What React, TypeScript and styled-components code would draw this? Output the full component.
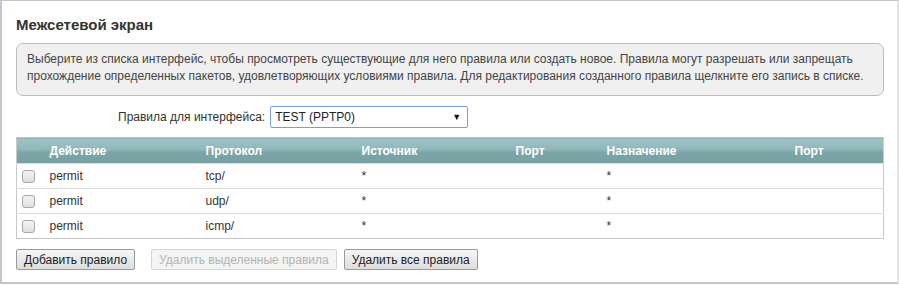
import React from "react";
import styled, { createGlobalStyle } from "styled-components";

const GlobalStyle = createGlobalStyle`
	html, body {
		margin: 0;
		padding: 0;
		background: #fff;
		font-family: "Liberation Sans", Arial, sans-serif;
		font-size: 12px;
		color: #333;
	}
`;

const columns = [
	{ title: "", width: 25 },
	{ title: "Действие", width: 156 },
	{ title: "Протокол", width: 156 },
	{ title: "Источник", width: 154 },
	{ title: "Порт", width: 91 },
	{ title: "Назначение", width: 188 },
	{ title: "Порт", width: 0 },
];

const rules = [
	{ action: "permit", proto: "tcp/", src: "*", srcPort: "", dst: "*", dstPort: "" },
	{ action: "permit", proto: "udp/", src: "*", srcPort: "", dst: "*", dstPort: "" },
	{ action: "permit", proto: "icmp/", src: "*", srcPort: "", dst: "*", dstPort: "" },
];

const App = () => {
	return (
		<Frame>
			<GlobalStyle />
			<Title>Межсетевой экран</Title>
			<InfoBox>
				Выберите из списка интерфейс, чтобы просмотреть существующие для него правила или создать новое. Правила могут
				разрешать или запрещать прохождение определенных пакетов, удовлетворяющих условиями правила. Для редактирования
				созданного правила щелкните его запись в списке.
			</InfoBox>
			<SelectRow>
				<Label>Правила для интерфейса:</Label>
				<Select>
					<span>TEST (PPTP0)</span>
					<Arrow>▼</Arrow>
				</Select>
			</SelectRow>
			<Table>
				<colgroup>
					{columns.map((c, i) => (
						<col key={i} style={c.width ? { width: c.width } : undefined} />
					))}
				</colgroup>
				<thead>
					<tr>
						{columns.map((c, i) => (
							<Th key={i}>{c.title}</Th>
						))}
					</tr>
				</thead>
				<tbody>
					{rules.map((r, i) => (
						<Row key={i}>
							<CheckCell>
								<Checkbox />
							</CheckCell>
							<Td>{r.action}</Td>
							<Td>{r.proto}</Td>
							<Td>{r.src}</Td>
							<Td>{r.srcPort}</Td>
							<Td>{r.dst}</Td>
							<Td>{r.dstPort}</Td>
						</Row>
					))}
				</tbody>
			</Table>
			<Buttons>
				<Button>Добавить правило</Button>
				<Button disabled $gap={16}>
					Удалить выделенные правила
				</Button>
				<Button $gap={7}>Удалить все правила</Button>
			</Buttons>
		</Frame>
	);
};

const Frame = styled.div`
	box-sizing: border-box;
	width: 899px;
	height: 284px;
	border-top: 1px solid #c3c6cc;
	border-left: 2px solid #c3c6cc;
	border-bottom: 2px solid #c3c6cc;
	border-right: 2px solid #e3e3e3;
	padding: 0 14px 0 14px;
	background: #fff;
`;

const Title = styled.h1`
	margin: 0;
	padding-top: 15px;
	height: 27px;
	font-size: 15px;
	font-weight: bold;
	color: #333;
`;

const InfoBox = styled.div`
	box-sizing: border-box;
	width: 868px;
	height: 53px;
	background: #f0f0f0;
	border: 1px solid #bdbdbd;
	border-radius: 7px;
	padding: 7px 10px;
	line-height: 17px;
	color: #444;
`;

const SelectRow = styled.div`
	display: flex;
	align-items: center;
	justify-content: flex-start;
	padding-left: 102px;
	margin-top: 10px;
	height: 22px;
`;

const Label = styled.span`
	color: #333;
	margin-right: 5px;
`;

const Select = styled.div`
	box-sizing: border-box;
	width: 198px;
	height: 22px;
	border: 1px solid #7b9ed6;
	border-radius: 2px;
	display: flex;
	align-items: center;
	justify-content: space-between;
	padding: 0 6px 0 4px;
	color: #222;
`;

const Arrow = styled.span`
	font-size: 9px;
	color: #111;
`;

const Table = styled.table`
	margin-top: 9px;
	width: 868px;
	border-collapse: collapse;
	table-layout: fixed;
	border: 1px solid #c8c8c8;
`;

const Th = styled.th`
	height: 25px;
	padding: 0 8px;
	text-align: left;
	font-weight: bold;
	color: #fff;
	background: linear-gradient(#a1c4c6 0%, #8fb6b8 45%, #7ba4a6 55%, #78a1a3 100%);
	white-space: nowrap;
`;

const Row = styled.tr`
	height: 25px;
	border-top: 1px solid #dcdcdc;
`;

const Td = styled.td`
	padding: 0 8px;
	color: #333;
`;

const CheckCell = styled.td`
	padding: 0 0 0 5px;
`;

const Checkbox = styled.span`
	display: block;
	box-sizing: border-box;
	width: 13px;
	height: 13px;
	border: 1px solid #a9a9a9;
	border-radius: 3px;
	background: linear-gradient(#f4f4f4, #dedede);
`;

const Buttons = styled.div`
	display: flex;
	margin-top: 10px;
`;

const Button = styled.button<{ $gap?: number }>`
	margin-left: ${(p) => p.$gap ?? 0}px;
	height: 21px;
	padding: 0 7px;
	font-family: "Liberation Sans", Arial, sans-serif;
	font-size: 12px;
	color: #222;
	background: linear-gradient(#f6f6f6, #dddddd);
	border: 1px solid #9a9a9a;
	border-radius: 2px;

	&:disabled {
		color: #b3b3b3;
		background: #f4f4f4;
		border-color: #d6d6d6;
	}
`;

export default App;
